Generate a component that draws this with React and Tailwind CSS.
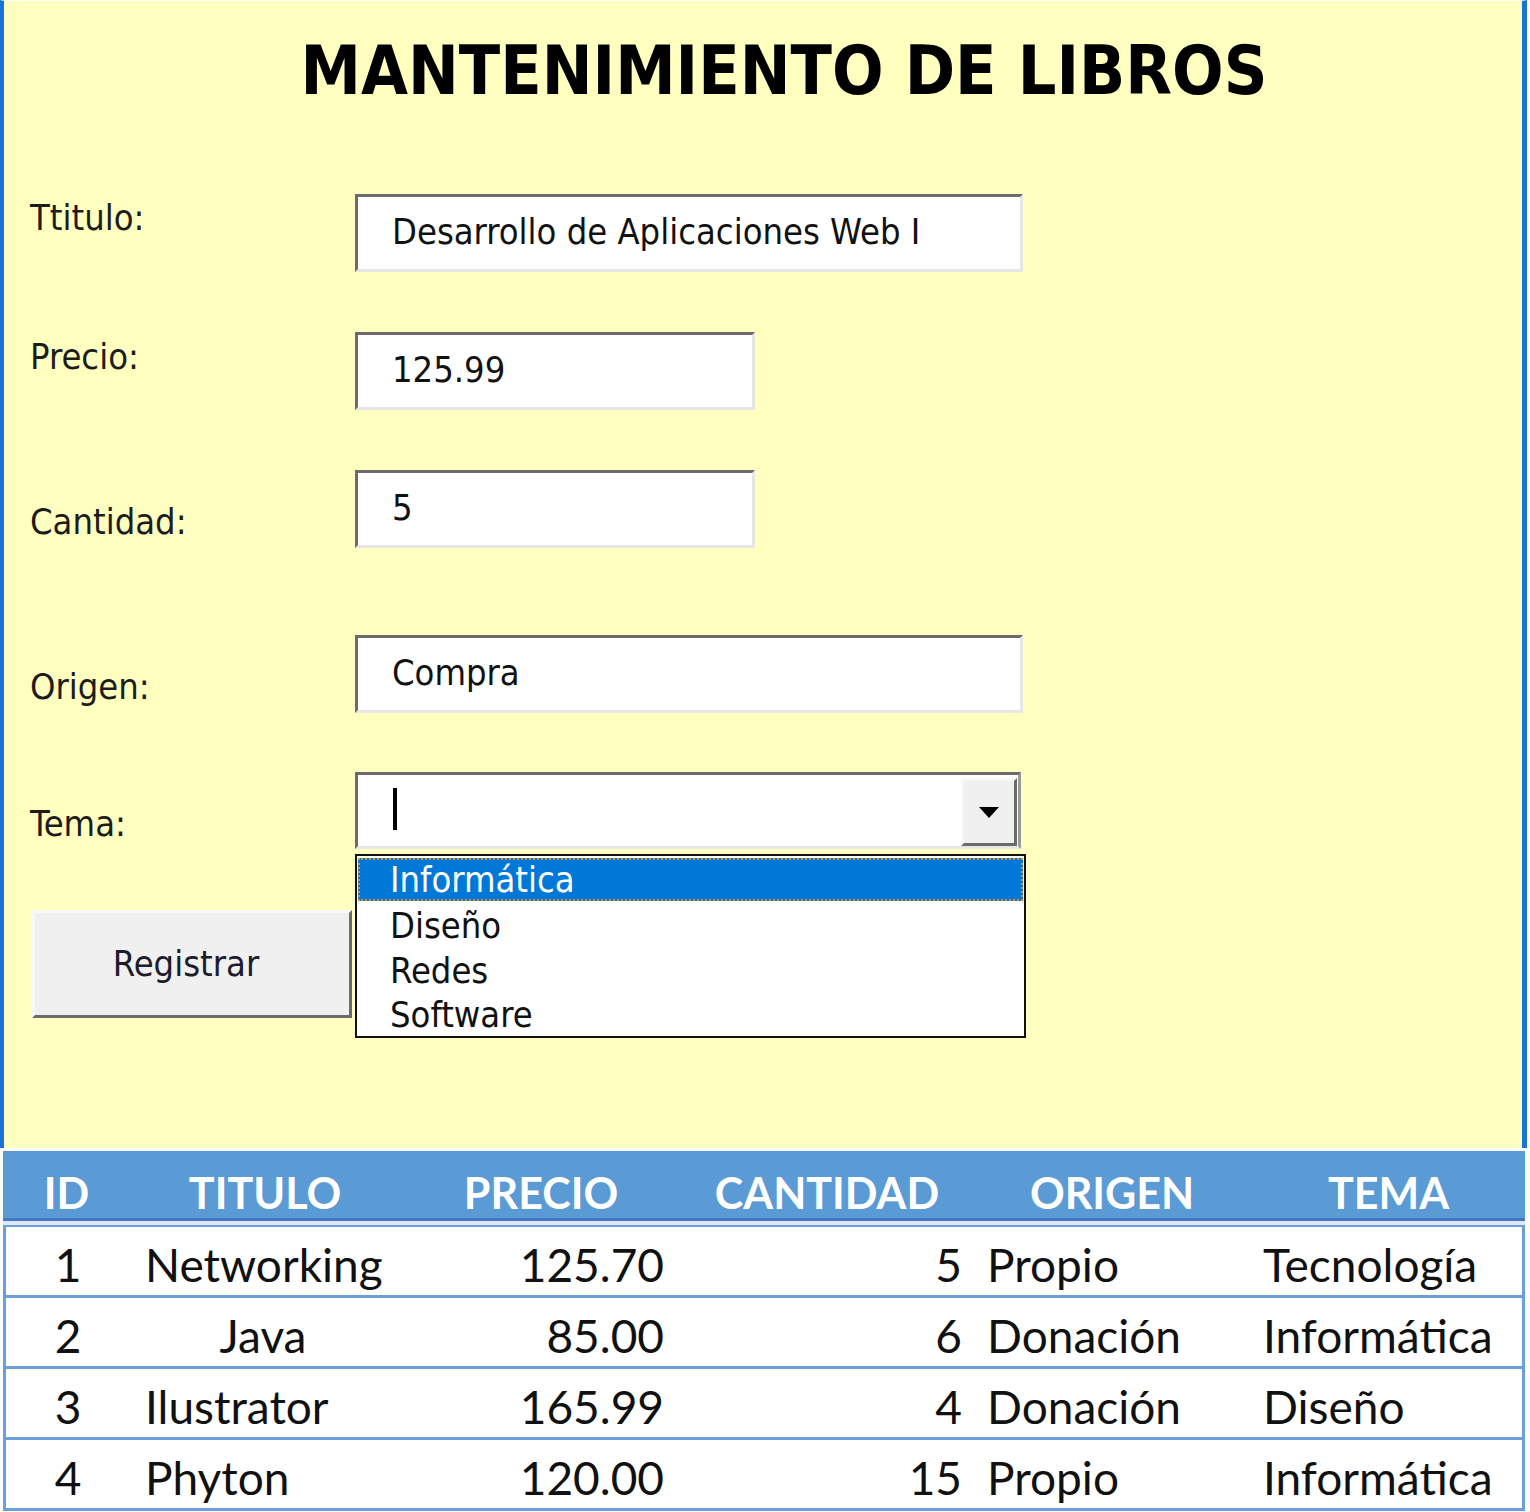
import React from "react";

const formFont = { fontFamily: '"DejaVu Sans Condensed", "DejaVu Sans", sans-serif' };
const tableFont = { fontFamily: 'Lato, "Open Sans", sans-serif' };

const libros = [
  { id: 1, titulo: "Networking", precio: "125.70", cantidad: 5, origen: "Propio", tema: "Tecnología", center: false },
  { id: 2, titulo: "Java", precio: "85.00", cantidad: 6, origen: "Donación", tema: "Informática", center: true },
  { id: 3, titulo: "Ilustrator", precio: "165.99", cantidad: 4, origen: "Donación", tema: "Diseño", center: false },
  { id: 4, titulo: "Phyton", precio: "120.00", cantidad: 15, origen: "Propio", tema: "Informática", center: false },
];

function Campo({ label, value, width, labelTop, className = "" }) {
  return (
    <div className={`flex items-start ${className}`}>
      <div className="w-[325px] text-[36px] leading-[44px] text-[#1c1c1c]" style={{ marginTop: labelTop }}>
        {label}
      </div>
      <div
        className={`${width} h-[78px] bg-white border-[3px] border-t-[#6b6b6b] border-l-[#6b6b6b] border-r-[#e6e6e6] border-b-[#e6e6e6] pl-[34px] pt-[13px] text-[36px] leading-[44px] text-[#111]`}
      >
        {value}
      </div>
    </div>
  );
}

export default function App() {
  return (
    <div className="w-[1530px] h-[1512px] bg-white overflow-hidden">
      {/* Formulario */}
      <div
        className="h-[1148px] bg-[#ffffc0] border-l-[4px] border-r-[5px] border-[#1a74d6] w-[1527px] pl-[26px] border-t border-t-white"
        style={formFont}
      >
        <h1 className="pt-[30px] pl-[16px] text-center text-[67.5px] leading-[80px] font-bold text-black">
          MANTENIMIENTO DE LIBROS
        </h1>

        <Campo className="mt-[83px]" label="Ttitulo:" value="Desarrollo de Aplicaciones Web I" width="w-[668px]" labelTop={2} />
        <Campo className="mt-[60px]" label="Precio:" value="125.99" width="w-[400px]" labelTop={3} />
        <Campo className="mt-[60px]" label="Cantidad:" value="5" width="w-[400px]" labelTop={30} />
        <Campo className="mt-[87px]" label="Origen:" value="Compra" width="w-[668px]" labelTop={30} />

        {/* Tema combo */}
        <div className="flex items-start mt-[59px]">
          <div className="w-[325px] text-[36px] leading-[44px] text-[#1c1c1c] mt-[30px]">Tema:</div>
          <div className="relative">
            <div className="w-[666px] h-[77px] bg-white border-[3px] border-t-[#6b6b6b] border-l-[#6b6b6b] border-r-[#9a9a9a] border-b-[#e6e6e6] flex items-start justify-between">
              <div className="ml-[35px] mt-[13px] w-[4px] h-[42px] bg-black" />
              <div className="mt-[3px] mr-[1px] w-[56px] h-[68px] bg-[#f0f0f0] border-[3px] border-t-[#f7f7f7] border-l-[#f7f7f7] border-r-[#6b6b6b] border-b-[#6b6b6b] flex items-center justify-center">
                <svg width="22" height="13" viewBox="0 0 22 13">
                  <path d="M1 1 H21 L11 12 Z" fill="#000" />
                </svg>
              </div>
            </div>

            {/* lista desplegada */}
            <div className="absolute left-0 top-[82px] w-[671px] h-[184px] bg-white border-[2px] border-[#111] z-10 pt-[2px] px-[1px] text-[36px] leading-[45px] text-[#111]">
              <div className="h-[43px] bg-[#0078d7] border-[2px] border-dotted border-[#e38a2b] text-white pl-[30px] leading-[40px]">
                Informática
              </div>
              <div className="pl-[32px] leading-[45px] mt-[2px]">Diseño</div>
              <div className="pl-[32px] leading-[45px]">Redes</div>
              <div className="pl-[32px] leading-[44px]">Software</div>
            </div>
          </div>
        </div>

        <button
          type="button"
          className="mt-[61px] ml-[2px] w-[320px] h-[108px] pr-[12px] bg-[#f0f0f0] border-[3px] border-t-[#f9f9f9] border-l-[#f9f9f9] border-r-[#6b6b6b] border-b-[#6b6b6b] text-[36px] leading-[44px] text-[#1c1c2c]"
          style={formFont}
        >
          Registrar
        </button>
      </div>

      {/* Tabla */}
      <div className="mt-[3px] ml-[3px] w-[1522px]" style={tableFont}>
        <div className="grid grid-cols-[127px_270px_282px_290px_280px_273px] h-[70px] bg-[#5b9bd5] border-b-[3px] border-[#4677c2] items-end pb-[0px] text-white font-bold text-[43px] leading-[50px] text-center">
          <div>ID</div>
          <div>TITULO</div>
          <div>PRECIO</div>
          <div>CANTIDAD</div>
          <div>ORIGEN</div>
          <div>TEMA</div>
        </div>
        <div className="h-[4px] bg-[#dde8f4]" />
        <div className="border-l-[3px] border-r-[3px] border-t-[2px] border-[#6a9fd9] text-[46px] leading-[56px] text-[#111]">
          {libros.map((l) => (
            <div
              key={l.id}
              className="grid grid-cols-[124px_270px_282px_290px_280px_270px] h-[71px] pt-[8px] border-b-[3px] border-[#6a9fd9] items-center"
            >
              <div className="text-center">{l.id}</div>
              <div className={l.center ? "text-center pr-[4px]" : "pl-[15px]"}>{l.titulo}</div>
              <div className="text-right pr-[18px]">{l.precio}</div>
              <div className="text-right pr-[10px]">{l.cantidad}</div>
              <div className="pl-[15px]">{l.origen}</div>
              <div className="pl-[11px] whitespace-nowrap">{l.tema}</div>
            </div>
          ))}
        </div>
      </div>
    </div>
  );
}
